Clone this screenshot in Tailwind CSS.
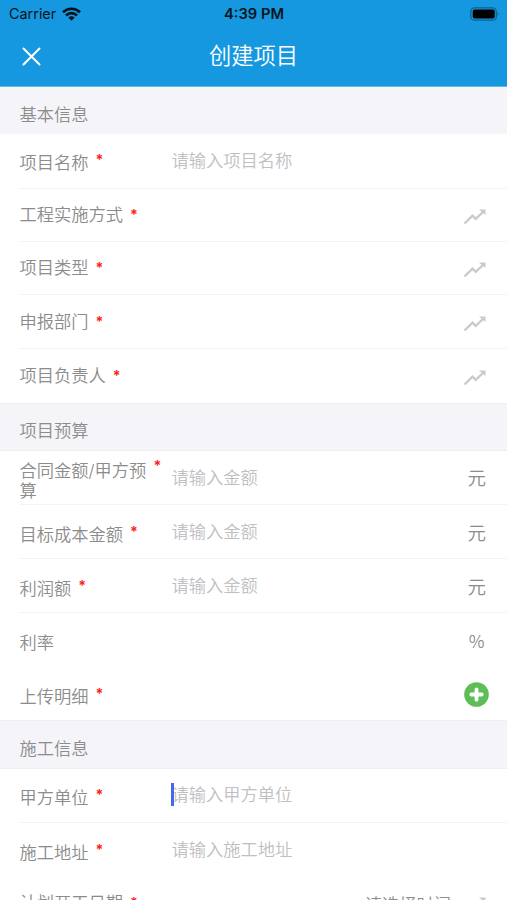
<!DOCTYPE html>
<html lang="zh-CN">
<head>
<meta charset="utf-8">
<title>创建项目</title>
<script src="https://cdn.jsdelivr.net/npm/@tailwindcss/browser@4"></script>
</head>
<body class="h-[900px] overflow-hidden bg-white font-['Inter','Noto_Sans_CJK_SC',sans-serif] text-[17.25px] font-[350] leading-5 text-[#8c8c8c]">
<svg class="hidden">
  <symbol id="trend" viewBox="0 0 24 18"><path d="M1.5 15.5 9.5 7.6l3.2 3.2L20 4" fill="none" stroke="#cacaca" stroke-width="2.3"/><path d="M16 1.5h6.5V7z" fill="#cacaca"/></symbol>
</svg>
<header class="h-[87px] bg-[#1598df] border-b border-[#65b9e9]">
  <div class="grid h-7 grid-cols-3 items-center pl-[9px] pr-2 text-[#07141c]">
    <div class="flex items-center gap-1.5 text-[14.4px] font-normal"><span>Carrier</span>
      <svg class="h-[14px] w-[19px]" viewBox="0 0 19 14" fill="none" stroke="#07141c" stroke-width="2.7"><path d="M1 5.2a12.2 12.2 0 0 1 17 0M4 8.4a8 8 0 0 1 11 0"/><path d="M9.500 13.700 6.300 10.600a4.600 4.600 0 0 1 6.400 0z" fill="#07141c" stroke="none"/></svg>
    </div>
    <div class="text-center text-[14.7px] font-semibold whitespace-nowrap">4:39 PM</div>
    <svg class="h-[14px] w-[30px] justify-self-end" viewBox="0 0 30 14"><rect x="1.800" y=".8" width="25.500" height="12.400" rx="3.800" fill="none" stroke="#0e618e" stroke-width="1.300"/><rect x="3.700" y="2.600" width="22" height="8.800" rx="2" fill="#000"/><path d="M28.500 5v4q2-2 0-4" fill="#0e618e"/></svg>
  </div>
  <div class="grid h-[55px] grid-cols-[60px_1fr_60px] items-center text-white">
    <svg class="ml-[22px] mt-0.5 h-[19px] w-[19px]" viewBox="0 0 19 19" stroke="#fff" stroke-width="2" stroke-linecap="round"><path d="m1.500 1.500 16 16m0-16-16 16"/></svg>
    <h1 class="text-center text-[22.3px] font-[350]">创建项目</h1>
  </div>
</header>

<main>
  <h2 class="flex h-[47px] items-center bg-[#f4f4f9] pl-[19.4px] pt-2 font-[350]">基本信息</h2>
  <div class="ml-[19.4px] flex h-[55px] border-b border-[#f4f4f4]">
    <div class="flex w-[152px] pt-[19px]">项目名称<b class="-mt-[3px] ml-[7px] text-[14px] text-[#f22]">*</b></div>
    <div class="pt-[17px] text-[#c0c0c4]">请输入项目名称</div>
  </div>
  <div class="ml-[19.4px] flex h-[53px] justify-between border-b border-[#f4f4f4] pr-5">
    <div class="flex pt-4">工程实施方式<b class="ml-[7px] text-[14px] text-[#f22]">*</b></div>
    <svg class="mt-[18.5px] h-[18px] w-6"><use href="#trend"/></svg>
  </div>
  <div class="ml-[19.4px] flex h-[53px] justify-between border-b border-[#f4f4f4] pr-5">
    <div class="flex pt-4">项目类型<b class="ml-[7px] text-[14px] text-[#f22]">*</b></div>
    <svg class="mt-[19px] h-[18px] w-6"><use href="#trend"/></svg>
  </div>
  <div class="ml-[19.4px] flex h-[54px] justify-between border-b border-[#f4f4f4] pr-5">
    <div class="flex pt-[17px]">申报部门<b class="ml-[7px] text-[14px] text-[#f22]">*</b></div>
    <svg class="mt-5 h-[18px] w-6"><use href="#trend"/></svg>
  </div>
  <div class="ml-[19.4px] flex h-[54px] justify-between pr-5">
    <div class="flex pt-[17px]">项目负责人<b class="ml-[7px] text-[14px] text-[#f22]">*</b></div>
    <svg class="mt-[19.5px] h-[18px] w-6"><use href="#trend"/></svg>
  </div>

  <h2 class="flex h-12 items-center border-y border-[#efeff2] bg-[#f4f4f9] pl-[19.4px] pt-2 font-[350]">项目预算</h2>
  <div class="ml-[19.4px] flex h-[54px] border-b border-[#f4f4f4] pr-[21px]">
    <div class="flex w-[152px] pt-[10px] leading-[19.5px]"><span class="w-[127px]">合同金额/甲方预算</span><b class="-mt-[5px] ml-[7px] text-[14px] text-[#f22]">*</b></div>
    <div class="flex-1 pt-[17px] text-[#c0c0c4]">请输入金额</div>
    <div class="pt-[17px] text-[18.5px]">元</div>
  </div>
  <div class="ml-[19.4px] flex h-[54px] border-b border-[#f4f4f4] pr-[21px]">
    <div class="flex w-[152px] pt-5">目标成本金额<b class="-mt-[3px] ml-[7px] text-[14px] text-[#f22]">*</b></div>
    <div class="flex-1 pt-[17px] text-[#c0c0c4]">请输入金额</div>
    <div class="pt-[17.5px] text-[18.5px]">元</div>
  </div>
  <div class="ml-[19.4px] flex h-[54px] border-b border-[#f4f4f4] pr-[21px]">
    <div class="flex w-[152px] pt-5">利润额<b class="-mt-[3px] ml-[7px] text-[14px] text-[#f22]">*</b></div>
    <div class="flex-1 pt-[17px] text-[#c0c0c4]">请输入金额</div>
    <div class="pt-[17.5px] text-[18.5px]">元</div>
  </div>
  <div class="ml-[19.4px] flex h-[54px] justify-between pr-[22.5px]">
    <div class="pt-5">利率</div>
    <div class="pt-[18px] font-['Noto_Sans_CJK_SC']">%</div>
  </div>
  <div class="ml-[19.4px] flex h-[53px] justify-between pr-[18px]">
    <div class="flex pt-5">上传明细<b class="-mt-[3px] ml-[7px] text-[14px] text-[#f22]">*</b></div>
    <svg class="mt-[15px] h-[25px] w-[25px]" viewBox="0 0 25 25"><circle cx="12.500" cy="12.500" r="12.300" fill="#5fbd58"/><path d="M12.500 7.300v10.400M7.300 12.500h10.400" stroke="#fff" stroke-width="3.800" stroke-linecap="round"/></svg>
  </div>

  <h2 class="flex h-[49px] items-center border-y border-[#efeff2] bg-[#f4f4f9] pl-[19.4px] pt-2 font-[350]">施工信息</h2>
  <div class="ml-[19.4px] flex h-[54px] border-b border-[#f4f4f4]">
    <div class="flex w-[152px] pt-[19px]">甲方单位<b class="-mt-[3px] ml-[7px] text-[14px] text-[#f22]">*</b></div>
    <div class="relative pt-4 text-[#c0c0c4]"><i class="absolute left-0 top-[14px] h-[23px] w-[2.5px] bg-[#4169e8]"></i>请输入甲方单位</div>
  </div>
  <div class="ml-[19.4px] flex h-[54px]">
    <div class="flex w-[152px] pt-5">施工地址<b class="-mt-[3px] ml-[7px] text-[14px] text-[#f22]">*</b></div>
    <div class="pt-[17px] text-[#c0c0c4]">请输入施工地址</div>
  </div>
  <div class="ml-[19.4px] flex h-[54px] pr-5">
    <div class="flex flex-1 pt-4">计划开工日期<b class="ml-[7px] text-[14px] text-[#f22]">*</b></div>
    <div class="pr-3 pt-[18px]">请选择时间</div>
    <svg class="mt-[19px] h-[18px] w-6"><use href="#trend"/></svg>
  </div>
</main>
</body>
</html>
